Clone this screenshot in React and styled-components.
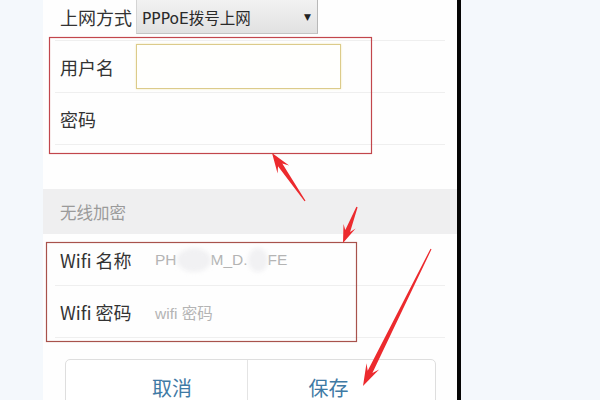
import React from "react";
import styled, { createGlobalStyle } from "styled-components";

const Global = createGlobalStyle`
  html, body { margin: 0; padding: 0; background: #f4f8fc; }
  body { font-family: "Noto Sans CJK SC", "Noto Sans", sans-serif; }
`;

const Page = styled.div`
  position: relative;
  width: 600px;
  height: 400px;
  overflow: hidden;
  display: flex;
  background: #f4f8fc;
`;

const Gutter = styled.div`
  width: ${(p) => p.$w}px;
  flex: ${(p) => (p.$grow ? 1 : "none")};
  background: #f4f8fc;
`;

const Bezel = styled.div`
  width: 4px;
  flex: none;
  background: #050505;
`;

const Phone = styled.div`
  width: 414px;
  flex: none;
  background: #fefefe;
  display: flex;
  flex-direction: column;
`;

const Row = styled.div`
  box-sizing: border-box;
  flex: none;
  height: ${(p) => p.$h}px;
  display: flex;
  align-items: ${(p) => (p.$stretch ? "stretch" : "center")};
  gap: ${(p) => p.$gap || 0}px;
  margin: 0 12px;
  padding: 0 0 ${(p) => p.$pb || 0}px 5px;
  border-bottom: 1px solid #efefef;
`;

const Label = styled.span`
  width: ${(p) => p.$w}px;
  flex: none;
  font-size: 18px;
  color: #333;
  align-self: center;
  white-space: nowrap;
`;

const Select = styled.div`
  width: 182px;
  box-sizing: border-box;
  display: flex;
  align-items: center;
  justify-content: space-between;
  padding: 0 6px 0 5px;
  background: linear-gradient(#f2f2f2, #e1e1e1);
  border-right: 1px solid #b8b8b8;
  border-bottom: 1px solid #c4c4c4;
  border-left: 1px solid #d4d4d4;
  font-family: "DejaVu Sans", "Noto Sans CJK SC", sans-serif;
  font-size: 15.5px;
  color: #2a2a2a;
`;

const Caret = styled.span`
  font-size: 9px;
  color: #222;
`;

const Input = styled.div`
  width: 205px;
  height: 45px;
  box-sizing: border-box;
  border: 1px solid #dccb8a;
  box-shadow: 0 0 2px #f2e8b8;
  background: #fffffd;
`;

const Value = styled.span`
  font-size: 15.5px;
  color: #b4b4b4;
  display: flex;
  align-items: center;
  font-family: "Liberation Sans", "Noto Sans CJK SC", sans-serif;
`;

const Blob = styled.span`
  display: inline-block;
  width: ${(p) => p.$w}px;
  height: 24px;
  border-radius: 50%;
  background: #f1f1f3;
  filter: blur(2px);
`;

const Spacer = styled.div`
  height: ${(p) => p.$h}px;
  flex: none;
`;

const Section = styled.div`
  height: 45px;
  flex: none;
  background: #efeff0;
  display: flex;
  align-items: center;
  padding-left: 17px;
  font-size: 16.5px;
  color: #9a9a9a;
`;

const Buttons = styled.div`
  margin: 0 21px 0 22px;
  height: 56px;
  flex: none;
  display: grid;
  grid-template-columns: 181px 1fr;
  border: 1px solid #dedede;
  border-radius: 5px;
  background: #fff;
`;

const Btn = styled.div`
  display: flex;
  align-items: flex-start;
  justify-content: center;
  padding-top: 18px;
  font-size: 20px;
  line-height: 1;
  color: #3f7aa5;
  padding-left: ${(p) => p.$pl || 0}px;
  padding-right: ${(p) => p.$pr || 0}px;
  border-left: ${(p) => (p.$divider ? "1px solid #e4e4e4" : "none")};
`;

const Overlay = styled.svg`
  position: absolute;
  left: 0;
  top: 0;
  pointer-events: none;
`;

function arrowPoints(tail, tip, h, hw, sw) {
  const dx = tip[0] - tail[0];
  const dy = tip[1] - tail[1];
  const L = Math.hypot(dx, dy);
  const d = [dx / L, dy / L];
  const n = [-d[1], d[0]];
  const at = (base, along, side) => [
    base[0] + d[0] * along + n[0] * side,
    base[1] + d[1] * along + n[1] * side,
  ];
  const pts = [
    at(tail, 0, 0.6),
    at(tip, -h * 0.72, sw),
    at(tip, -h, hw),
    tip,
    at(tip, -h, -hw),
    at(tip, -h * 0.72, -sw),
    at(tail, 0, -0.6),
  ];
  return pts.map((p) => p.map((v) => v.toFixed(1)).join(",")).join(" ");
}

const arrows = [
  { tail: [305, 201], tip: [272, 153], h: 20, hw: 7, sw: 2.6 },
  { tail: [357, 207], tip: [343, 243], h: 18, hw: 6.5, sw: 2.6 },
  { tail: [431, 249], tip: [363, 386], h: 22, hw: 7, sw: 2.6 },
];

export default function App() {
  return (
    <>
      <Global />
      <Page>
        <Gutter $w={43} />
        <Phone>
          <Row $h={41} $pb={6} $gap={4} $stretch>
            <Label $w={72}>上网方式</Label>
            <Select>
              <span>PPPoE拨号上网</span>
              <Caret>▼</Caret>
            </Select>
          </Row>
          <Row $h={52}>
            <Label $w={76}>用户名</Label>
            <Input />
          </Row>
          <Row $h={52}>
            <Label $w={76}>密码</Label>
          </Row>
          <Spacer $h={44} />
          <Section>无线加密</Section>
          <Row $h={52}>
            <Label $w={95}>Wifi 名称</Label>
            <Value>
              PH<Blob $w={34} />M_D.<Blob $w={20} />FE
            </Value>
          </Row>
          <Row $h={52}>
            <Label $w={95}>Wifi 密码</Label>
            <Value>wifi 密码</Value>
          </Row>
          <Spacer $h={21} />
          <Buttons>
            <Btn $pl={31}>取消</Btn>
            <Btn $divider $pr={26}>保存</Btn>
          </Buttons>
        </Phone>
        <Bezel />
        <Gutter $grow />
        <Overlay width="600" height="400" viewBox="0 0 600 400">
          <rect x="49.5" y="37.5" width="322" height="116" fill="none" stroke="#c2464c" strokeWidth="1.2" />
          <rect x="46.5" y="242.5" width="310" height="99" fill="none" stroke="#a8524c" strokeWidth="1.2" />
          {arrows.map((a, i) => (
            <polygon key={i} points={arrowPoints(a.tail, a.tip, a.h, a.hw, a.sw)} fill="#ec2a2e" />
          ))}
        </Overlay>
      </Page>
    </>
  );
}
